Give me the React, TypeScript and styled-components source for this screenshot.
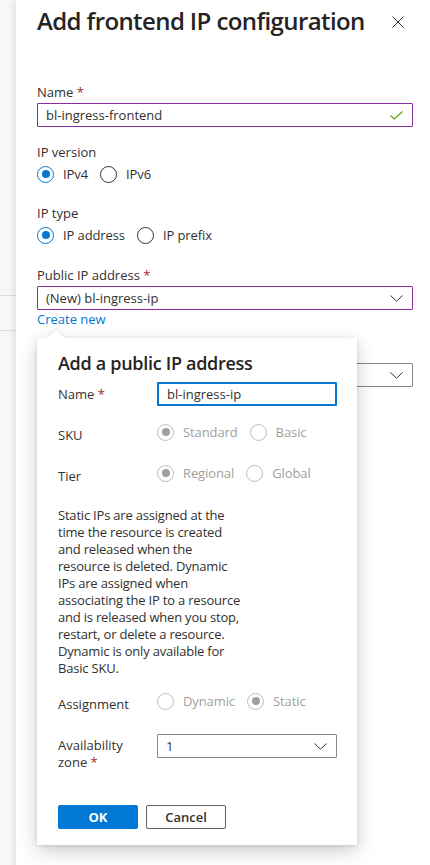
import React from 'react';
import styled, { createGlobalStyle } from 'styled-components';

const GlobalStyle = createGlobalStyle`
  html, body {
    margin: 0;
    padding: 0;
  }
  body {
    background: #f7f7f7;
    font-family: "Open Sans", "Noto Sans", sans-serif;
    color: #323130;
    -webkit-font-smoothing: antialiased;
  }
`;

type RadioState = 'on' | 'off';

interface RadioItem {
  label: string;
  state: RadioState;
}

const infoLines = [
  'Static IPs are assigned at the',
  'time the resource is created',
  'and released when the',
  'resource is deleted. Dynamic',
  'IPs are assigned when',
  'associating the IP to a resource',
  'and is released when you stop,',
  'restart, or delete a resource.',
  'Dynamic is only available for',
  'Basic SKU.',
];

const Chevron: React.FC = () => (
  <svg width="13" height="7" viewBox="0 0 13 7">
    <polyline points="0.5,0.5 6.5,6.2 12.5,0.5" fill="none" stroke="#323130" strokeWidth="1" />
  </svg>
);

const Radios: React.FC<{ items: RadioItem[]; disabled?: boolean }> = ({ items, disabled }) => (
  <RadioGroup>
    {items.map(item => (
      <RadioOption key={item.label}>
        <RadioCircle $checked={item.state === 'on'} $disabled={!!disabled} />
        <RadioText $disabled={!!disabled}>{item.label}</RadioText>
      </RadioOption>
    ))}
  </RadioGroup>
);

const App: React.FC = () => {
  return (
    <Page>
      <GlobalStyle />
      <BackdropStrip>
        <GhostLine />
        <GhostLine $gap={34} />
      </BackdropStrip>
      <Panel>
        <Header>
          <Title>Add frontend IP configuration</Title>
          <CloseButton aria-label="Close">
            <svg width="12" height="12" viewBox="0 0 12 12">
              <line x1="0.5" y1="0.5" x2="11.5" y2="11.5" stroke="#323130" strokeWidth="1" />
              <line x1="11.5" y1="0.5" x2="0.5" y2="11.5" stroke="#323130" strokeWidth="1" />
            </svg>
          </CloseButton>
        </Header>

        <Field $top={47}>
          <Label>
            Name <Required>*</Required>
          </Label>
          <TextBox $tone="dirty">
            <span>bl-ingress-frontend</span>
            <svg width="13" height="9" viewBox="0 0 13 9">
              <polyline points="0.5,4.5 4.2,8 12.5,0.5" fill="none" stroke="#57a300" strokeWidth="1.1" />
            </svg>
          </TextBox>
        </Field>

        <Field $top={17}>
          <Label>IP version</Label>
          <RadioRow>
            <Radios
              items={[
                { label: 'IPv4', state: 'on' },
                { label: 'IPv6', state: 'off' },
              ]}
            />
          </RadioRow>
        </Field>

        <Field $top={22}>
          <Label>IP type</Label>
          <RadioRow>
            <Radios
              items={[
                { label: 'IP address', state: 'on' },
                { label: 'IP prefix', state: 'off' },
              ]}
            />
          </RadioRow>
        </Field>

        <Field $top={23}>
          <Label>
            Public IP address <Required>*</Required>
          </Label>
          <TextBox $tone="dirty">
            <span>(New) bl-ingress-ip</span>
            <Chevron />
          </TextBox>
          <LinkAnchor>
            <Link>Create new</Link>
            <Callout>
              <CalloutTitle>Add a public IP address</CalloutTitle>

              <CalloutRow $top={7}>
                <RowLabel $offset={4}>
                  Name <Required>*</Required>
                </RowLabel>
                <Control>
                  <TextBox $tone="focus">
                    <span>bl-ingress-ip</span>
                  </TextBox>
                </Control>
              </CalloutRow>

              <CalloutRow $top={17}>
                <RowLabel $offset={4}>SKU</RowLabel>
                <Control>
                  <Radios
                    disabled
                    items={[
                      { label: 'Standard', state: 'on' },
                      { label: 'Basic', state: 'off' },
                    ]}
                  />
                </Control>
              </CalloutRow>

              <CalloutRow $top={20}>
                <RowLabel $offset={4}>Tier</RowLabel>
                <Control>
                  <Radios
                    disabled
                    items={[
                      { label: 'Regional', state: 'on' },
                      { label: 'Global', state: 'off' },
                    ]}
                  />
                </Control>
              </CalloutRow>

              <InfoText>
                {infoLines.map(line => (
                  <InfoLine key={line}>{line}</InfoLine>
                ))}
              </InfoText>

              <CalloutRow $top={15}>
                <RowLabel $offset={4}>Assignment</RowLabel>
                <Control>
                  <Radios
                    disabled
                    items={[
                      { label: 'Dynamic', state: 'off' },
                      { label: 'Static', state: 'on' },
                    ]}
                  />
                </Control>
              </CalloutRow>

              <CalloutRow $top={21}>
                <RowLabel $offset={3}>
                  Availability
                  <br />
                  zone <Required>*</Required>
                </RowLabel>
                <Control>
                  <TextBox $tone="plain" $inset={9}>
                    <span>1</span>
                    <Chevron />
                  </TextBox>
                </Control>
              </CalloutRow>

              <Actions>
                <Button $primary>OK</Button>
                <Button>Cancel</Button>
              </Actions>
            </Callout>
          </LinkAnchor>
        </Field>

        {/* next field of the blade, mostly covered by the callout */}
        <Field $top={17}>
          <LabelSpacer />
          <TextBox $tone="plain" $align="end">
            <Chevron />
          </TextBox>
        </Field>
      </Panel>
    </Page>
  );
};

export default App;

const Page = styled.div`
  display: flex;
  width: 430px;
  min-height: 865px;
  overflow: hidden;
`;

const BackdropStrip = styled.div`
  width: 16px;
  flex-shrink: 0;
  padding-top: 295px;
`;

const GhostLine = styled.div<{ $gap?: number }>`
  height: 1px;
  margin-top: ${p => p.$gap || 0}px;
  background: #e1dfdd;
`;

const Panel = styled.div`
  position: relative;
  flex: 1;
  min-height: 865px;
  padding: 5px 17px 0 21px;
  background: #fff;
  box-shadow: 0 0 9px rgba(0, 0, 0, 0.14);
`;

const Header = styled.div`
  display: flex;
  align-items: center;
  justify-content: space-between;
  height: 32px;
`;

const Title = styled.h1`
  margin: 0;
  font-size: 24px;
  line-height: 32px;
  font-weight: 600;
  letter-spacing: -0.6px;
  color: #252423;
  white-space: nowrap;
`;

const CloseButton = styled.div`
  display: flex;
  width: 12px;
  height: 12px;
  margin: 2px 9px 0 0;
`;

const Field = styled.div<{ $top: number }>`
  margin-top: ${p => p.$top}px;
`;

const Label = styled.div`
  font-size: 13px;
  line-height: 16px;
  margin-bottom: 3px;
  color: #323130;
`;

const LabelSpacer = styled.div`
  height: 16px;
  margin-bottom: 3px;
`;

const Required = styled.span`
  color: #a4262c;
`;

const toneBorder = {
  dirty: '1px solid #8a2da5',
  focus: '2px solid #0078d4',
  plain: '1px solid #8a8886',
};

const TextBox = styled.div<{
  $tone: keyof typeof toneBorder;
  $inset?: number;
  $align?: 'between' | 'end';
}>`
  box-sizing: border-box;
  display: flex;
  align-items: center;
  justify-content: ${p => (p.$align === 'end' ? 'flex-end' : 'space-between')};
  height: 24px;
  padding: 0 ${p => p.$inset ?? 9}px 0 8px;
  border: ${p => toneBorder[p.$tone]};
  border-radius: 1px;
  background: #fff;
  font-size: 13px;
  color: #323130;
`;

const RadioRow = styled.div`
  margin-top: 5px;
`;

const RadioGroup = styled.div`
  display: flex;
  align-items: center;
  height: 18px;
`;

const RadioOption = styled.div`
  display: flex;
  align-items: center;
  gap: 9px;
  margin-right: 12px;
`;

const RadioCircle = styled.span<{ $checked: boolean; $disabled: boolean }>`
  position: relative;
  box-sizing: border-box;
  width: 17px;
  height: 17px;
  border-radius: 50%;
  border: 1px solid
    ${p => (p.$disabled ? '#bebbb8' : p.$checked ? '#0078d4' : '#323130')};

  &::after {
    content: '';
    display: ${p => (p.$checked ? 'block' : 'none')};
    position: absolute;
    left: 3.5px;
    top: 3.5px;
    width: 8px;
    height: 8px;
    border-radius: 50%;
    background: ${p => (p.$disabled ? '#a19f9d' : '#0078d4')};
  }
`;

const RadioText = styled.span<{ $disabled: boolean }>`
  font-size: 13px;
  line-height: 16px;
  letter-spacing: -0.1px;
  color: ${p => (p.$disabled ? '#a19f9d' : '#323130')};
`;

const LinkAnchor = styled.div`
  position: relative;
  margin-top: 1px;
`;

const Link = styled.span`
  display: block;
  font-size: 13px;
  line-height: 16px;
  color: #0078d4;
`;

const Callout = styled.div`
  position: absolute;
  z-index: 10;
  left: 0;
  top: calc(100% + 11px);
  box-sizing: border-box;
  width: 320px;
  padding: 13px 20px 16px 21px;
  background: #fff;
  box-shadow: 0 6px 18px rgba(0, 0, 0, 0.2), 0 1px 4px rgba(0, 0, 0, 0.1);

  &::before {
    content: '';
    position: absolute;
    left: 13px;
    top: -6px;
    width: 12px;
    height: 12px;
    background: #fff;
    transform: rotate(45deg);
    box-shadow: -2px -2px 4px rgba(0, 0, 0, 0.06);
  }
`;

const CalloutTitle = styled.div`
  font-size: 18px;
  line-height: 24px;
  font-weight: 600;
  letter-spacing: -0.3px;
  color: #252423;
`;

const CalloutRow = styled.div<{ $top: number }>`
  display: flex;
  align-items: flex-start;
  margin-top: ${p => p.$top}px;
`;

const RowLabel = styled.div<{ $offset: number }>`
  width: 99px;
  flex-shrink: 0;
  margin-top: ${p => p.$offset}px;
  font-size: 13px;
  line-height: 17px;
  color: #323130;
`;

const Control = styled.div`
  flex: 1;
`;

const InfoText = styled.div`
  margin-top: 22px;
  font-size: 13px;
  line-height: 17px;
  letter-spacing: -0.2px;
  color: #323130;
`;

const InfoLine = styled.span`
  display: block;
  white-space: nowrap;
`;

const Actions = styled.div`
  display: flex;
  gap: 8px;
  margin-top: 34px;
`;

const Button = styled.button<{ $primary?: boolean }>`
  box-sizing: border-box;
  width: 80px;
  height: 24px;
  padding: 0;
  border-radius: 2px;
  font-family: inherit;
  font-size: 13px;
  font-weight: ${p => (p.$primary ? 700 : 600)};
  color: ${p => (p.$primary ? '#fff' : '#323130')};
  background: ${p => (p.$primary ? '#0078d4' : '#fff')};
  border: 1px solid ${p => (p.$primary ? '#0078d4' : '#605e5c')};
`;
